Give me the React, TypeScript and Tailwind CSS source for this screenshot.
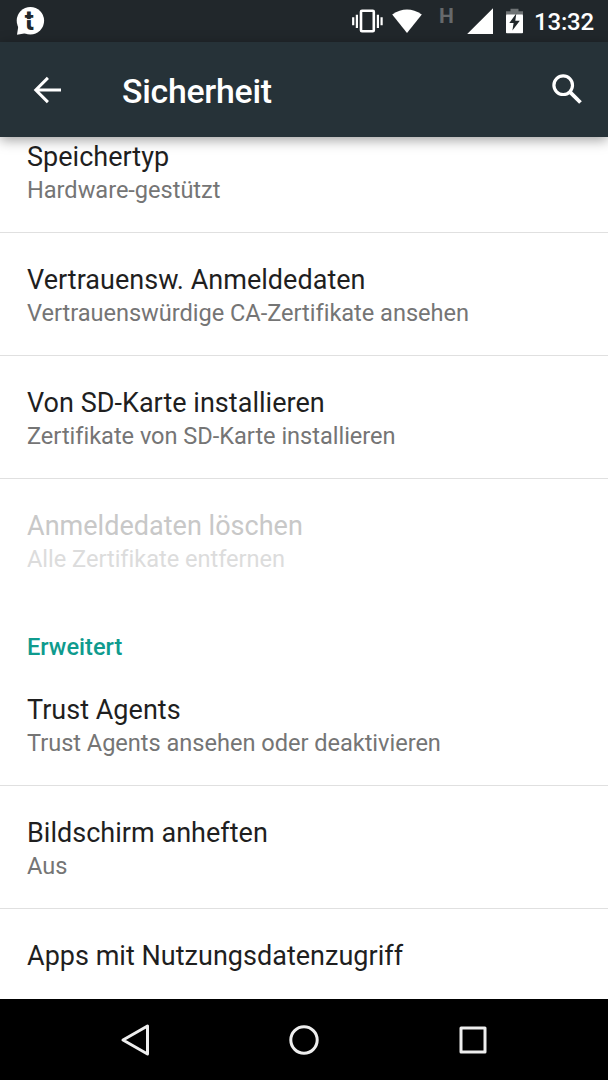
import type { ReactNode } from 'react';

type RowProps = {
  title: string;
  summary?: string;
  disabled?: boolean;
  divider?: boolean;
};

function Row({ title, summary, disabled = false, divider = true }: RowProps) {
  return (
    <li
      className={`h-[123px] shrink-0 px-[27px] pt-[30px] border-b ${
        divider ? 'border-[#e0e0e0]' : 'border-transparent'
      }`}
    >
      <p
        className={`text-[27px] leading-[34px] tracking-[0.02px] whitespace-nowrap ${
          disabled ? 'text-[#c8c8c8]' : 'text-[#1f1f1f]'
        }`}
      >
        {title}
      </p>
      {summary && (
        <p
          className={`text-[23.6px] leading-[32px] tracking-[-0.03px] whitespace-nowrap ${
            disabled ? 'text-[#dcdcdc]' : 'text-[#757575]'
          }`}
        >
          {summary}
        </p>
      )}
    </li>
  );
}

function NavButton({ label, children }: { label: string; children: ReactNode }) {
  return (
    <button aria-label={label} className="w-[168.5px] flex justify-center">
      <svg
        width="36"
        height="36"
        viewBox="0 0 36 36"
        fill="none"
        stroke="#eeeeee"
        strokeWidth="3"
        strokeLinejoin="round"
      >
        {children}
      </svg>
    </button>
  );
}

function StatusBar() {
  return (
    <div className="h-[42px] shrink-0 bg-[#21272b] flex items-start justify-between pl-4 pr-[14px]">
      <svg width="30" height="42" viewBox="16 0 30 42">
        <circle cx="30.4" cy="20.7" r="13.7" fill="#fff" />
        <path d="M18.5 25L17 34.8L27 33Z" fill="#fff" />
        <text
          x="24.8"
          y="30.2"
          fontSize="27"
          fontWeight="700"
          fill="#21272b"
          fontFamily="Roboto, sans-serif"
        >
          t
        </text>
        <path d="M24 19.6H36" stroke="#fff" strokeWidth="1" />
      </svg>

      <div className="flex items-start">
        <svg width="184" height="42" viewBox="350 0 184 42">
          {/* vibrate */}
          <rect x="361" y="10.7" width="12.8" height="20.6" rx="1" fill="none" stroke="#fff" strokeWidth="2.6" />
          <path
            d="M353.2 17.3V25.3M356.9 14.8V28M377.9 14.8V28M381.6 17.3V25.3"
            stroke="#fff"
            strokeWidth="2.2"
          />
          {/* wifi */}
          <path d="M392.2 14.6Q407 4.4 421.8 14.6L407 33Z" fill="#fff" />
          <text
            x="439"
            y="23"
            fontSize="21"
            fontWeight="700"
            fill="#66696b"
            fontFamily="Roboto, sans-serif"
          >
            H
          </text>
          {/* signal */}
          <path d="M467.2 34L493 8.2V34Z" fill="#fff" />
          {/* battery */}
          <path d="M506 15V11.2H510.5V8.8H518.5V11.2H523V15Z" fill="#6f7375" />
          <rect x="506" y="14.5" width="17" height="18.7" rx="0.8" fill="#fff" />
          <path d="M516.3 13.5L509.3 23H513.6L512.4 30.5L519.8 20.8H515.3Z" fill="#21272b" />
        </svg>
        <span className="text-[24px] leading-[44px] tracking-[-0.2px] font-medium text-white">13:32</span>
      </div>
    </div>
  );
}

export default function App() {
  return (
    <div className="w-[608px] h-[1080px] flex flex-col overflow-hidden bg-white font-['Roboto',sans-serif]">
      <StatusBar />

      <header className="relative z-10 h-[95px] shrink-0 bg-[#263238] flex items-center justify-between pl-[31px] pr-6 shadow-[0_3px_12px_rgba(0,0,0,0.38)]">
        <div className="flex items-center">
          <button aria-label="Zurück">
            <svg width="32" height="32" viewBox="0 0 32 32" fill="none" stroke="#fff" strokeWidth="3">
              <path d="M30 16H5M16.9 3.9L4.8 16L16.9 28.1" />
            </svg>
          </button>
          <h1 className="pl-[59px] pt-1 text-[33.8px] leading-[40px] tracking-[-0.25px] font-medium text-white">
            Sicherheit
          </h1>
        </div>
        <button aria-label="Suchen" className="pb-0.5">
          <svg width="34" height="34" viewBox="0 0 34 34" fill="none" stroke="#fff">
            <circle cx="13.2" cy="13.2" r="9.3" strokeWidth="3.2" />
            <path d="M19.8 19.8L30.5 30.5" strokeWidth="3.8" />
          </svg>
        </button>
      </header>

      <main className="flex-1 min-h-0 overflow-hidden">
        <ul className="-mt-[27px] flex flex-col">
          <Row title="Speichertyp" summary="Hardware-gestützt" />
          <Row title="Vertrauensw. Anmeldedaten" summary="Vertrauenswürdige CA-Zertifikate ansehen" />
          <Row title="Von SD-Karte installieren" summary="Zertifikate von SD-Karte installieren" />
          <Row title="Anmeldedaten löschen" summary="Alle Zertifikate entfernen" disabled divider={false} />
          <li className="h-[61px] shrink-0 px-[27px] pt-[29px] text-[23.6px] leading-[32px] font-medium text-[#0f9b8e]">
            Erweitert
          </li>
          <Row title="Trust Agents" summary="Trust Agents ansehen oder deaktivieren" />
          <Row title="Bildschirm anheften" summary="Aus" />
          <Row title="Apps mit Nutzungsdatenzugriff" />
        </ul>
      </main>

      <nav className="h-[81px] shrink-0 bg-black flex items-center justify-center">
        <NavButton label="Zurück">
          <path d="M5 18L29.5 4V32Z" />
        </NavButton>
        <NavButton label="Startseite">
          <circle cx="18" cy="18" r="13.2" />
        </NavButton>
        <NavButton label="Übersicht">
          <rect x="6" y="6" width="24" height="24" />
        </NavButton>
      </nav>
    </div>
  );
}
